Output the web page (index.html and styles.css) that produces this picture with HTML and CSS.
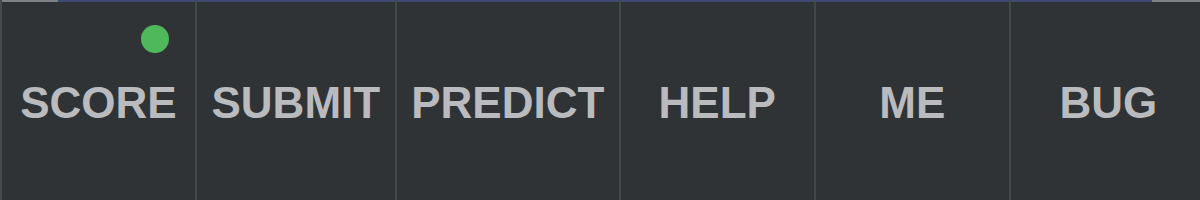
FILE: index.html
```html
<!DOCTYPE html>
<html>
<head>
<meta charset="utf-8">
<link rel="stylesheet" href="styles.css">
</head>
<body>
<nav class="bar">
  <div class="tab tab-score"><span class="label">SCORE</span><span class="dot"></span></div>
  <div class="tab"><span class="label">SUBMIT</span></div>
  <div class="tab"><span class="label">PREDICT</span></div>
  <div class="tab"><span class="label">HELP</span></div>
  <div class="tab"><span class="label">ME</span></div>
  <div class="tab tab-last"><span class="label">BUG</span></div>
</nav>
</body>
</html>
```

FILE: styles.css
```css
html, body {
  margin: 0;
  padding: 0;
  background: #303336;
  overflow: hidden;
}
.bar {
  position: relative;
  display: flex;
  height: 200px;
  width: 1200px;
  background: #303336;
  border-left: 2px solid #484b4e;
  box-sizing: border-box;
  overflow: hidden;
  font-family: "Liberation Sans", Arial, sans-serif;
}
.bar::before {
  content: "";
  position: absolute;
  top: 0;
  left: 0;
  right: 0;
  height: 2px;
  background: linear-gradient(to right, #7d8084 0, #7d8084 56px, #3c4a6e 56px, #3c4a6e 1150px, #7d8084 1150px);
}
.tab {
  position: relative;
  flex: 0 0 auto;
  min-width: 195px;
  box-sizing: border-box;
  padding: 5px 14.5px 0;
  display: flex;
  align-items: center;
  justify-content: center;
  border-right: 2px solid #44474a;
}
.tab-last {
  border-right: none;
}
.label {
  font-size: 44px;
  line-height: 1;
  font-weight: 700;
  color: #b9bbbe;
  white-space: nowrap;
}
.dot {
  position: absolute;
  left: 139px;
  top: 25px;
  width: 28px;
  height: 28px;
  border-radius: 50%;
  background: #4fb85a;
}
```
